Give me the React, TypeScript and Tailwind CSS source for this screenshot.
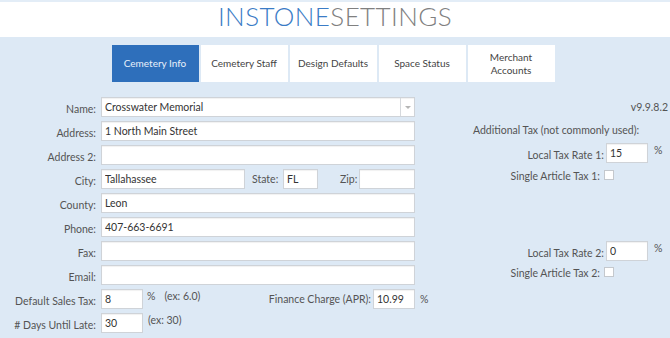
import React from 'react';

const FONT = "font-['Lato','Open_Sans',sans-serif]";

const TABS = ['Cemetery Info', 'Cemetery Staff', 'Design Defaults', 'Space Status', 'Merchant Accounts'];

const inputCls =
  'shrink-0 h-[20px] bg-white border border-[#cfd3d8] shadow-[inset_0_1px_1px_rgba(0,0,0,0.06)] px-[3px] text-[10.5px] text-[#333] leading-[18px] outline-none';

const Label: React.FC<{ children: React.ReactNode; className?: string }> = ({ children, className }) => (
  <span className={`shrink-0 text-[10.5px] text-[#545454] whitespace-nowrap ${className || ''}`}>{children}</span>
);

const Row: React.FC<{ label?: string; children?: React.ReactNode; right?: React.ReactNode }> = ({ label, children, right }) => (
  <div className="flex h-[24px] items-start">
    <div className="flex w-[420px] shrink-0 items-start">
      <div className="w-[96px] shrink-0 text-right leading-[20px]">
        {label && <Label>{label}</Label>}
      </div>
      <div className="ml-[5px] flex items-start">{children}</div>
    </div>
    <div className="flex-1">{right}</div>
  </div>
);

const TaxRate: React.FC<{ label: string; value: string }> = ({ label, value }) => (
  <div className="flex items-start">
    <div className="w-[184px] text-right leading-[20px]">
      <Label>{label}</Label>
    </div>
    <input className={`${inputCls} ml-[2px] w-[42px]`} defaultValue={value} />
    <Label className="ml-[6px] leading-[14px]">%</Label>
  </div>
);

const SingleArticle: React.FC<{ label: string }> = ({ label }) => (
  <div className="flex items-center h-[12px]">
    <div className="w-[180px] text-right leading-[12px]">
      <Label>{label}</Label>
    </div>
    <span className="ml-[4px] w-[10px] h-[10px] bg-white border border-[#c4c8cd]" />
  </div>
);

export default function App() {
  return (
    <div className={`w-[670px] h-[338px] overflow-hidden bg-[#dde9f5] ${FONT}`}>
      {/* Title */}
      <div className="h-[37px] bg-white shadow-[inset_0_2px_0_#e3edf7] flex justify-center">
        <h1 className="text-[26px] font-light leading-[32px] tracking-[0.4px]">
          <span className="text-[#3b7cc6]">INSTONE</span>
          <span className="text-[#808080]">SETTINGS</span>
        </h1>
      </div>

      {/* Tabs */}
      <div className="flex justify-center gap-[2px] mt-[8px] pr-[4px]">
        {TABS.map((t, i) => (
          <div
            key={t}
            className={`w-[87px] h-[37px] flex items-center justify-center text-center text-[10px] leading-[13px] px-[12px] ${
              i === 0 ? 'bg-[#2e6fbb] text-[#e8f0fa]' : 'bg-white text-[#444]'
            }`}
          >
            <span className={t === 'Merchant Accounts' ? '' : 'whitespace-nowrap'}>{t}</span>
          </div>
        ))}
      </div>

      {/* Form */}
      <div className="mt-[15px]">
        <Row
          label="Name:"
          right={<div className="text-right pr-[2px] leading-[14px] pt-[1px]"><Label>v9.9.8.2</Label></div>}
        >
          <div className={`${inputCls} w-[314px] flex items-center pr-0`}>
            <span className="flex-1">Crosswater Memorial</span>
            <span className="h-full w-[14px] border-l border-[#d6d9dd] flex items-center justify-center">
              <span className="w-0 h-0 border-l-[3px] border-r-[3px] border-t-[3px] border-l-transparent border-r-transparent border-t-[#b5b5b5]" />
            </span>
          </div>
        </Row>
        <Row
          label="Address:"
          right={<div className="pl-[53px] leading-[14px]"><Label>Additional Tax (not commonly used):</Label></div>}
        >
          <input className={`${inputCls} w-[314px]`} defaultValue="1 North Main Street" />
        </Row>
        <Row label="Address 2:" right={<div className="-mt-[2px]"><TaxRate label="Local Tax Rate 1:" value="15" /></div>}>
          <input className={`${inputCls} w-[314px]`} />
        </Row>
        <Row label="City:" right={<SingleArticle label="Single Article Tax 1:" />}>
          <input className={`${inputCls} w-[144px]`} defaultValue="Tallahassee" />
          <Label className="ml-[7px] w-[31px] leading-[20px]">State:</Label>
          <input className={`${inputCls} w-[35px]`} defaultValue="FL" />
          <Label className="ml-[22px] w-[19px] leading-[20px]">Zip:</Label>
          <input className={`${inputCls} w-[56px]`} />
        </Row>
        <Row label="County:">
          <input className={`${inputCls} w-[314px]`} defaultValue="Leon" />
        </Row>
        <Row label="Phone:">
          <input className={`${inputCls} w-[314px]`} defaultValue="407-663-6691" />
        </Row>
        <Row label="Fax:" right={<TaxRate label="Local Tax Rate 2:" value="0" />}>
          <input className={`${inputCls} w-[314px]`} />
        </Row>
        <Row label="Email:" right={<div className="pt-[1px]"><SingleArticle label="Single Article Tax 2:" /></div>}>
          <input className={`${inputCls} w-[314px]`} />
        </Row>
        <Row label="Default Sales Tax:">
          <div className="w-[314px] shrink-0 flex items-start">
            <input className={`${inputCls} w-[42px]`} defaultValue="8" />
            <Label className="ml-[4px] leading-[14px]">%</Label>
            <Label className="ml-[9px] leading-[14px]">(ex: 6.0)</Label>
            <div className="ml-auto flex items-start">
              <Label className="mr-[2px] leading-[20px]">Finance Charge (APR):</Label>
              <input className={`${inputCls} w-[42px]`} defaultValue="10.99" />
            </div>
          </div>
          <Label className="ml-[5px] leading-[20px]">%</Label>
        </Row>
        <Row label="# Days Until Late:">
          <input className={`${inputCls} w-[42px]`} defaultValue="30" />
          <Label className="ml-[5px] leading-[14px]">(ex: 30)</Label>
        </Row>
      </div>
    </div>
  );
}
